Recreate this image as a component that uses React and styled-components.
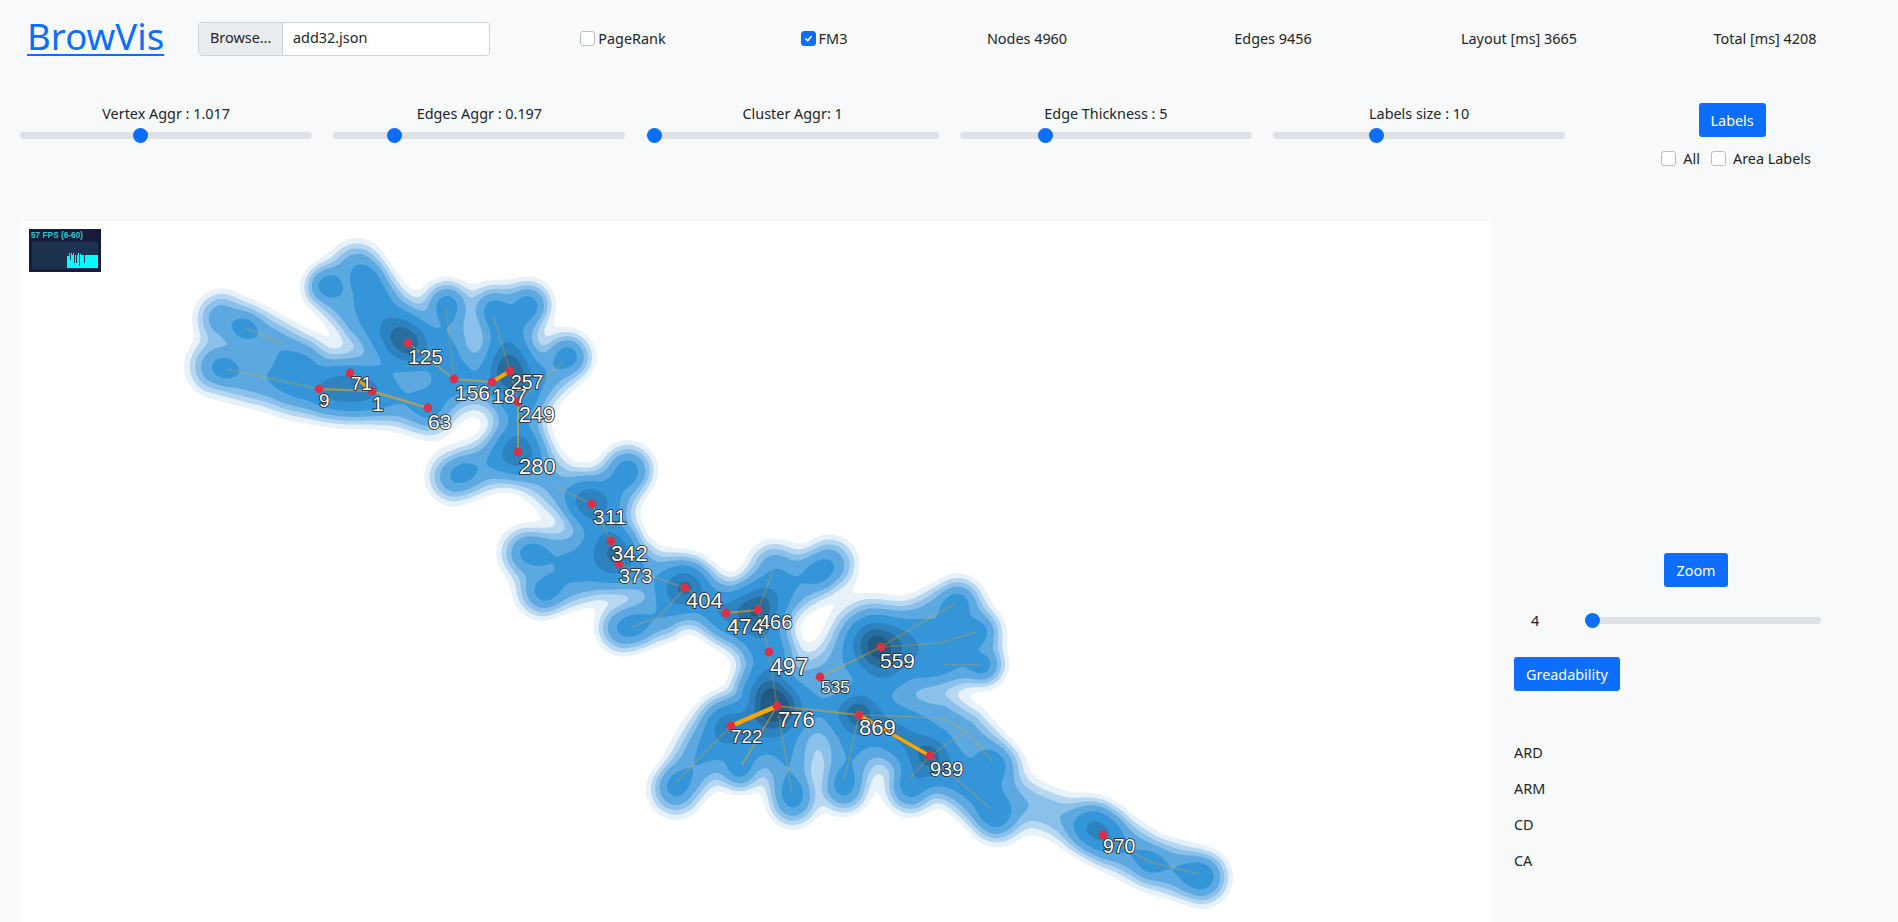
import styled, { createGlobalStyle } from "styled-components";

const GlobalStyle = createGlobalStyle`
  html, body {
    margin: 0;
    height: 100%;
    overflow: hidden;
    background: #f8f9fa;
    color: #212529;
    font-family: "Noto Sans", sans-serif;
    font-size: 14.4px;
    line-height: 21px;
  }
`;

const Page = styled.div`
  height: 922px;
  overflow: hidden;
  display: flex;
  flex-direction: column;
`;

const Header = styled.header`
  display: flex;
  align-items: center;
  height: 33px;
  margin-top: 22px;
  padding-left: 27px;
`;

const Title = styled.a`
  font-size: 36.6px;
  line-height: 43px;
  margin-top: -5px;
  color: #0d6efd;
  text-decoration: underline;
  text-decoration-thickness: 2px;
  text-underline-offset: 4px;
  width: 137px;
  margin-right: 34px;
`;

const FilePicker = styled.div`
  display: flex;
  width: 292px;
  height: 34px;
  margin-right: 33px;
  border: 1px solid #ced4da;
  border-radius: 4px;
  box-sizing: border-box;
  overflow: hidden;
  background: #fff;
`;

const Browse = styled.span`
  width: 84px;
  box-sizing: border-box;
  padding-left: 11px;
  line-height: 30px;
  background: #e9ecef;
  border-right: 1px solid #ced4da;
`;

const FileName = styled.span`
  padding-left: 10px;
  line-height: 30px;
`;

const Cell = styled.div`
  width: ${(p) => p.$w}px;
  padding-right: ${(p) => p.$gap || 0}px;
  box-sizing: content-box;
  display: flex;
  justify-content: center;
  align-items: center;
`;

const Box = styled.span`
  width: 15px;
  height: 15px;
  box-sizing: border-box;
  border: 1px solid ${(p) => (p.$on ? "#0d6efd" : "#b9bec4")};
  border-radius: 3px;
  background: ${(p) => (p.$on ? "#0d6efd" : "#fff")};
  display: inline-flex;
  align-items: center;
  justify-content: center;
  flex: none;
`;

const CheckLabel = styled.label`
  display: inline-flex;
  align-items: center;
  gap: ${(p) => p.$gap || 3}px;
`;

const Toggle = ({ on, children, gap }) => (
  <CheckLabel $gap={gap}>
    <Box $on={on}>
      {on && (
        <svg width="11" height="11" viewBox="0 0 20 20">
          <path d="M5 10.5l3.5 3.5L15 6.5" fill="none" stroke="#fff" strokeWidth="3" strokeLinecap="round" strokeLinejoin="round" />
        </svg>
      )}
    </Box>
    {children}
  </CheckLabel>
);

const Controls = styled.section`
  display: grid;
  grid-template-columns: repeat(5, 292.25px) 1fr;
  column-gap: 21px;
  height: 118px;
  margin-top: 48px;
  padding: 0 20px;
`;

const SliderBlock = styled.div`
  display: flex;
  flex-direction: column;
  align-items: center;
`;

const SliderLabel = styled.div`
  height: 21px;
  margin-bottom: 4px;
`;

const Range = styled.input.attrs({ type: "range", readOnly: true })`
  appearance: none;
  -webkit-appearance: none;
  display: block;
  margin: 0;
  padding: 0;
  width: ${(p) => p.$w || 292}px;
  height: 15px;
  background: transparent;

  &::-webkit-slider-runnable-track {
    height: 7px;
    border-radius: 4px;
    background: #dee2e6;
  }
  &::-webkit-slider-thumb {
    -webkit-appearance: none;
    width: 15px;
    height: 15px;
    margin-top: -4px;
    border: 0;
    border-radius: 50%;
    background: #0d6efd;
  }
`;

const Button = styled.button`
  font: inherit;
  color: #fff;
  background: #0d6efd;
  border: 0;
  border-radius: 3px;
  height: 34px;
  padding: 0 12px;
`;

const LabelsBlock = styled.div`
  display: flex;
  flex-direction: column;
  align-items: center;
`;

const CheckRow = styled.div`
  display: flex;
  gap: 11px;
  margin-top: 11px;
  margin-left: 8px;
`;

const Body = styled.div`
  display: flex;
  flex: 1;
  padding-left: 20px;
  min-height: 0;
`;

const Canvas = styled.div`
  position: relative;
  width: 1472px;
  height: 701px;
  background: #fff;
  overflow: hidden;
  flex: none;
`;

const MapSvg = styled.svg`
  display: block;
`;

const Label = styled.text`
  font-family: "Liberation Sans", Arial, sans-serif;
  fill: #fff;
  stroke: #222;
  stroke-width: 1.7px;
  paint-order: stroke;
`;

const FpsPanel = styled.div`
  position: absolute;
  left: 9px;
  top: 8px;
  width: 72px;
  height: 43px;
  background: #1a1a3c;
`;

const FpsText = styled.div`
  position: absolute;
  left: 2px;
  top: 1px;
  font: bold 8.3px/10px "Liberation Sans", Arial, sans-serif;
  color: #22c8cc;
  white-space: nowrap;
`;

const FpsGraph = styled.svg`
  position: absolute;
  left: 3px;
  top: 13px;
  background: #1b3350;
`;

const Side = styled.aside`
  flex: 1;
  padding: 332px 20px 0 22px;
  display: flex;
  flex-direction: column;
`;

const Centered = styled.div`
  display: flex;
  justify-content: center;
`;

const ZoomRow = styled.div`
  display: flex;
  align-items: center;
  margin-top: 23px;
`;

const ZoomValue = styled.div`
  width: 42px;
  margin-right: 29px;
  text-align: center;
`;

const GreadRow = styled.div`
  margin-top: 26px;
`;

const Metrics = styled.div`
  display: flex;
  flex-direction: column;
  gap: 15px;
  margin-top: 51px;
`;

// [weight, sigma, x, y, x, y, ...] ridges of the density field, in page coordinates
const ridges = [
  [0.7, 15, 222, 318, 253, 332, 300, 359],
  [0.72, 16, 216, 367, 253, 377, 319, 389, 372, 391, 428, 408],
  [0.35, 18, 300, 385, 372, 388],
  [0.62, 14, 328, 288, 359, 320, 408, 343],
  [0.72, 15, 357, 268, 383, 307, 408, 343],
  [0.55, 18, 408, 343, 454, 379, 492, 382, 510, 371],
  [0.66, 14, 447, 304, 454, 379],
  [0.66, 14, 493, 308, 510, 371],
  [0.66, 14, 528, 304, 513, 337, 510, 371],
  [0.66, 15, 567, 357, 523, 397],
  [0.65, 15, 510, 371, 518, 402, 518, 452],
  [0.7, 15, 454, 477, 518, 452],
  [0.55, 16, 518, 452, 558, 488, 592, 504],
  [0.7, 15, 628, 470, 610, 497, 592, 504],
  [0.6, 16, 592, 504, 611, 541, 619, 564, 685, 588],
  [0.7, 15, 526, 553, 577, 555, 611, 550],
  [0.7, 15, 542, 591, 583, 577, 619, 564],
  [0.75, 14, 622, 628, 660, 616, 685, 588],
  [0.65, 16, 685, 588, 726, 613, 758, 610],
  [0.66, 15, 774, 568, 758, 610],
  [0.7, 15, 830, 564, 790, 590, 758, 610],
  [0.6, 15, 726, 613, 769, 652, 777, 706],
  [0.4, 15, 758, 610, 769, 652],
  [0.85, 18, 765, 695, 777, 706, 731, 726],
  [0.72, 15, 676, 790, 724, 730],
  [0.62, 13, 740, 770, 773, 710],
  [0.72, 14, 793, 802, 779, 713],
  [0.66, 14, 844, 790, 857, 717],
  [0.72, 14, 910, 790, 930, 756],
  [0.7, 16, 777, 706, 859, 715, 930, 756],
  [0.72, 15, 997, 817, 952, 773, 930, 756],
  [0.62, 15, 997, 766, 965, 731, 942, 718, 859, 715],
  [1.15, 21, 871, 640, 883, 663],
  [0.5, 17, 820, 677, 881, 647],
  [0.66, 15, 958, 603, 934, 615, 881, 647],
  [0.66, 14, 979, 632, 940, 643, 881, 647],
  [0.62, 13, 984, 665, 932, 665],
  [0.4, 18, 932, 665, 891, 670],
  [0.42, 15, 952, 773, 1032, 805, 1103, 835],
  [0.8, 15, 1093, 827, 1115, 842, 1150, 862, 1202, 878],
  // filling between the bottom fingers
  [0.18, 18, 700, 745, 900, 750],
];

// small bumps: tips of the fingers and the dark hubs, [weight, sigma, x, y]
const bumps = [
  [0.42, 9, 245, 328], [0.42, 9, 225, 368], [0.5, 10, 327, 285], [0.5, 10, 368, 278], [0.5, 10, 376, 298],
  [0.5, 10, 447, 307], [0.5, 10, 495, 313], [0.5, 10, 528, 308], [0.5, 10, 567, 357], [0.4, 10, 463, 473],
  [0.5, 11, 627, 473], [0.42, 10, 533, 553], [0.42, 10, 547, 592], [0.42, 11, 633, 627], [0.45, 11, 820, 572],
  [0.5, 11, 956, 605], [0.5, 10, 975, 633], [0.45, 9, 981, 666], [0.45, 10, 677, 783], [0.4, 9, 740, 767],
  [0.5, 10, 793, 793], [0.5, 10, 844, 783], [0.5, 10, 912, 783], [0.55, 11, 993, 813], [0.5, 10, 993, 762],
  [0.4, 9, 1150, 862], [0.6, 11, 1199, 875], [0.65, 12, 1098, 830],
  [0.4, 24, 395, 345], [0.65, 14, 405, 338], [0.5, 18, 350, 385], [0.55, 14, 335, 390], [0.45, 14, 365, 392], [0.4, 12, 428, 405],
  [0.42, 15, 505, 372], [0.4, 12, 518, 452], [0.45, 12, 588, 500], [0.5, 14, 610, 542], [0.35, 14, 618, 560],
  [0.45, 13, 685, 586], [0.45, 14, 755, 610], [0.3, 14, 725, 612], [0.3, 14, 769, 650],
  [1.05, 16, 768, 695], [0.6, 12, 731, 725], [0.75, 14, 858, 710], [0.5, 14, 900, 735], [0.35, 12, 925, 752],
  [0.55, 13, 872, 640],
];

const levels = [
  [0.1, "#e6f1fa"],
  [0.19, "#b5d7f1"],
  [0.31, "#8ac0e9"],
  [0.48, "#5ca9e1"],
  [0.84, "#3595d9"],
  [1.55, "#2d82c0"],
  [2.25, "#276d9e"],
  [2.95, "#215a83"],
];

const X0 = 20;
const Y0 = 221;
const STEP = 3;
const COLS = 491;
const ROWS = 235;
const LABEL_SCALE = 1.05;

function addRidge(field, w, s, xs, ys) {
  const r = s * 4;
  const i0 = Math.max(0, Math.floor((Math.min(...xs) - r - X0) / STEP));
  const i1 = Math.min(COLS, Math.ceil((Math.max(...xs) + r - X0) / STEP));
  const j0 = Math.max(0, Math.floor((Math.min(...ys) - r - Y0) / STEP));
  const j1 = Math.min(ROWS, Math.ceil((Math.max(...ys) + r - Y0) / STEP));
  for (let j = j0; j <= j1; j++) {
    for (let i = i0; i <= i1; i++) {
      const px = X0 + i * STEP;
      const py = Y0 + j * STEP;
      let best = Infinity;
      for (let k = 0; k < xs.length - 1; k++) {
        const dx = xs[k + 1] - xs[k];
        const dy = ys[k + 1] - ys[k];
        const t = Math.max(0, Math.min(1, ((px - xs[k]) * dx + (py - ys[k]) * dy) / (dx * dx + dy * dy || 1)));
        const ex = px - xs[k] - t * dx;
        const ey = py - ys[k] - t * dy;
        best = Math.min(best, ex * ex + ey * ey);
      }
      field[j * (COLS + 1) + i] += w * Math.exp(-best / (2 * s * s));
    }
  }
}

function buildField() {
  const field = new Float32Array((COLS + 1) * (ROWS + 1));
  ridges.forEach(([w, s, ...c]) => {
    addRidge(field, w, s, c.filter((_, i) => i % 2 === 0), c.filter((_, i) => i % 2 === 1));
  });
  bumps.forEach(([w, s, x, y]) => addRidge(field, w, s, [x, x], [y, y]));
  return field;
}

// marching squares: every cell adds its clipped polygon to one path
function contourPath(field, level) {
  let d = "";
  const at = (i, j) => field[j * (COLS + 1) + i];
  const fmt = (n) => +n.toFixed(1);
  for (let j = 0; j < ROWS; j++) {
    let run = -1;
    for (let i = 0; i <= COLS; i++) {
      const full =
        i < COLS && at(i, j) >= level && at(i + 1, j) >= level && at(i, j + 1) >= level && at(i + 1, j + 1) >= level;
      if (full) {
        if (run < 0) run = i;
        continue;
      }
      if (run >= 0) {
        const x1 = X0 + run * STEP;
        const x2 = X0 + i * STEP;
        const y = Y0 + j * STEP;
        d += `M${x1} ${y}H${x2}V${y + STEP}H${x1}Z`;
        run = -1;
      }
      if (i === COLS) continue;
      const corners = [
        [i, j],
        [i + 1, j],
        [i + 1, j + 1],
        [i, j + 1],
      ];
      const pts = [];
      corners.forEach(([a, b], k) => {
        const [c, e] = corners[(k + 1) % 4];
        const va = at(a, b);
        const vc = at(c, e);
        if (va >= level) pts.push([a, b]);
        if (va >= level !== vc >= level) {
          const t = (level - va) / (vc - va);
          pts.push([a + (c - a) * t, b + (e - b) * t]);
        }
      });
      if (pts.length > 2) {
        d += "M" + pts.map(([a, b]) => `${fmt(X0 + a * STEP)} ${fmt(Y0 + b * STEP)}`).join("L") + "Z";
      }
    }
  }
  return d;
}

const field = buildField();
const contours = levels.map(([lv, color]) => ({ color, d: contourPath(field, lv) }));

// [width, opacity, points]
const edges = [
  [1.5, 0.28, "245,328 282,343"],
  [1.5, 0.28, "227,369 319,389"],
  [2.4, 0.5, "319,389 372,391"],
  [3, 0.9, "350,373 372,391"],
  [2.4, 0.55, "372,391 428,408"],
  [1.8, 0.4, "408,343 454,379"],
  [1.5, 0.25, "446,307 454,379"],
  [2, 0.55, "454,379 492,382"],
  [4, 1, "492,382 510,371"],
  [1.5, 0.28, "493,315 510,371"],
  [1.5, 0.28, "510,371 518,402"],
  [1.5, 0.25, "518,402 564,361"],
  [2, 0.55, "518,402 518,452"],
  [1.5, 0.28, "558,488 592,504"],
  [1.5, 0.28, "592,504 611,541"],
  [1.5, 0.28, "611,541 619,564"],
  [1.5, 0.28, "619,564 685,588"],
  [1.5, 0.28, "685,588 660,616 632,627"],
  [1.5, 0.28, "685,588 726,613"],
  [2, 0.55, "726,613 758,610"],
  [1.5, 0.28, "758,610 773,571"],
  [1.5, 0.28, "758,610 769,652"],
  [1.5, 0.28, "769,652 777,706"],
  [1.8, 0.4, "820,677 881,647"],
  [1.5, 0.28, "881,647 934,615 955,604"],
  [1.5, 0.28, "881,647 940,643 976,632"],
  [1.5, 0.25, "944,665 981,665"],
  [4.5, 1, "777,706 731,726"],
  [1.8, 0.45, "777,706 742,765"],
  [1.5, 0.28, "731,726 676,782"],
  [1.5, 0.28, "777,706 792,793"],
  [1.8, 0.45, "777,706 859,715"],
  [1.5, 0.28, "859,715 942,718 966,731 992,761"],
  [1.5, 0.28, "859,715 844,780"],
  [3.5, 1, "859,715 930,756"],
  [1.5, 0.28, "930,756 966,731"],
  [1.5, 0.28, "930,756 910,778"],
  [1.5, 0.28, "930,756 991,809"],
  [1.5, 0.28, "1103,835 1150,862 1199,874"],
];

// [text, node x, node y, text x, baseline, font size]
const nodes = [
  ["125", 408, 343, 408, 364, 20],
  ["9", 319, 389, 319, 407, 18],
  ["71", 350, 373, 351, 390, 18],
  ["1", 372, 391, 372, 411, 20],
  ["63", 428, 408, 428, 429, 20],
  ["156", 454, 379, 455, 400, 20],
  ["187", 492, 382, 492, 403, 20],
  ["257", 510, 371, 511, 389, 18.5],
  ["249", 518, 402, 519, 422, 20.5],
  ["280", 518, 452, 519, 474, 21],
  ["311", 592, 504, 593, 524, 20],
  ["342", 611, 541, 611, 561, 21],
  ["373", 619, 564, 619, 583, 19],
  ["404", 685, 588, 686, 608, 21],
  ["474", 726, 613, 727, 634, 21],
  ["466", 758, 610, 759, 629, 19],
  ["497", 769, 652, 770, 675, 22],
  ["535", 820, 677, 821, 693, 16.5],
  ["559", 881, 647, 880, 668, 20],
  ["776", 777, 706, 778, 727, 21],
  ["722", 731, 726, 731, 743, 18],
  ["869", 859, 715, 859, 735, 21],
  ["939", 930, 756, 930, 776, 19],
  ["970", 1103, 835, 1103, 853, 18.5],
];

const sliders = [
  ["Vertex Aggr : 1.017", 40.6],
  ["Edges Aggr : 0.197", 19.4],
  ["Cluster Aggr: 1", 0],
  ["Edge Thickness : 5", 28.2],
  ["Labels size : 10", 34.5],
];

const FPS_BARS =
  "M35 26V14H37V11H38V18H39V11H40V13H41V11H42V21H43V13H44V21H45V13H46V11H47V24H48V12H49V13H52V21H53V13H66V26Z";

function App() {
  return (
    <Page>
      <GlobalStyle />
      <Header>
        <Title href="#">BrowVis</Title>
        <FilePicker>
          <Browse>Browse...</Browse>
          <FileName>add32.json</FileName>
        </FilePicker>
        <Cell $w={200}>
          <Toggle>PageRank</Toggle>
        </Cell>
        <Cell $w={202}>
          <Toggle on>FM3</Toggle>
        </Cell>
        <Cell $w={204} $gap={21}>Nodes 4960</Cell>
        <Cell $w={246}>Edges 9456</Cell>
        <Cell $w={246}>Layout [ms] 3665</Cell>
        <Cell $w={246}>Total [ms] 4208</Cell>
      </Header>
      <Controls>
        {sliders.map(([label, value]) => (
          <SliderBlock key={label}>
            <SliderLabel>{label}</SliderLabel>
            <Range min="0" max="100" step="0.1" defaultValue={value} />
          </SliderBlock>
        ))}
        <LabelsBlock>
          <Button>Labels</Button>
          <CheckRow>
            <Toggle gap={7}>All</Toggle>
            <Toggle gap={7}>Area Labels</Toggle>
          </CheckRow>
        </LabelsBlock>
      </Controls>
      <Body>
        <Canvas>
          <MapSvg width="1472" height="701" viewBox="20 221 1472 701">
            {contours.map(({ color, d }) => (
              <path key={color} d={d} fill={color} />
            ))}
            {edges.map(([w, op, points]) => (
              <polyline key={points} points={points} fill="none" stroke="#ffa500" strokeWidth={w} strokeOpacity={op} strokeLinejoin="round" />
            ))}
            {nodes.map(([t, x, y]) => (
              <circle key={t} cx={x} cy={y} r="4.4" fill="#dc3048" />
            ))}
            {nodes.map(([t, , , x, y, size]) => (
              <Label key={t} x={x} y={y} fontSize={size * LABEL_SCALE}>
                {t}
              </Label>
            ))}
          </MapSvg>
          <FpsPanel>
            <FpsText>57 FPS (6-60)</FpsText>
            <FpsGraph width="66" height="27" viewBox="0 0 66 27">
              <path d={FPS_BARS} fill="#0ff" />
            </FpsGraph>
          </FpsPanel>
        </Canvas>
        <Side>
          <Centered>
            <Button>Zoom</Button>
          </Centered>
          <ZoomRow>
            <ZoomValue>4</ZoomValue>
            <Range $w={236} min="4" max="100" defaultValue="4" />
          </ZoomRow>
          <GreadRow>
            <Button>Greadability</Button>
          </GreadRow>
          <Metrics>
            <div>ARD</div>
            <div>ARM</div>
            <div>CD</div>
            <div>CA</div>
          </Metrics>
        </Side>
      </Body>
    </Page>
  );
}

export default App;
